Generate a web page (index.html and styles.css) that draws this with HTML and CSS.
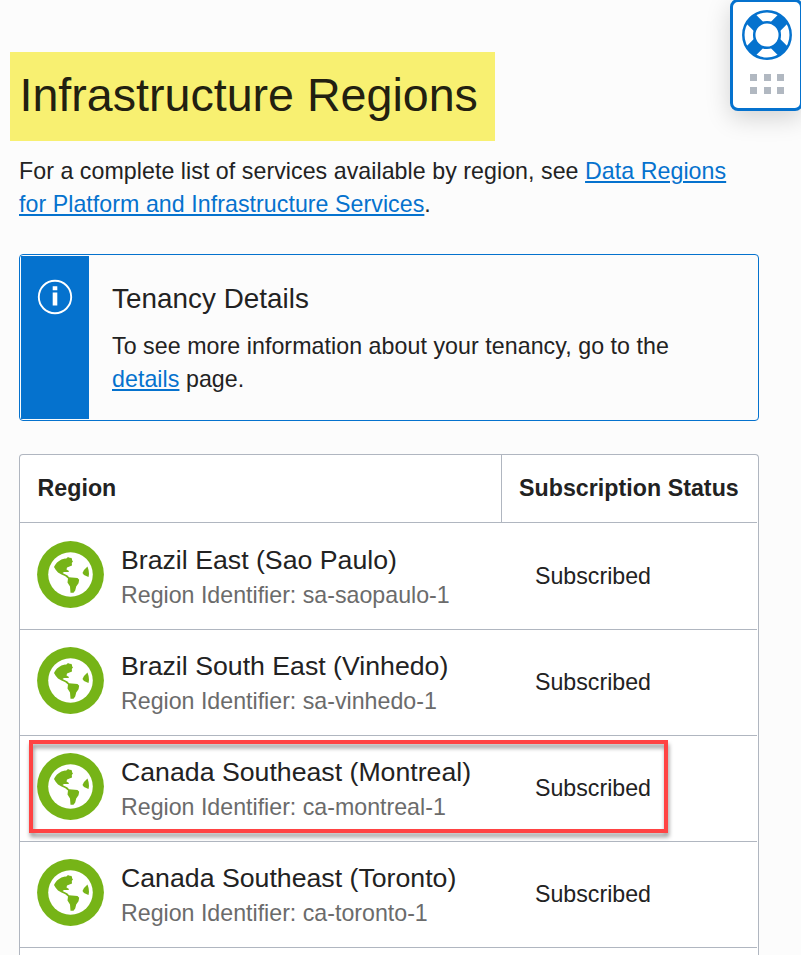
FILE: index.html
```html
<!DOCTYPE html>
<html lang="en">
<head>
<meta charset="utf-8">
<title>Infrastructure Regions</title>
<link rel="stylesheet" href="styles.css">
</head>
<body>
<svg class="defs" aria-hidden="true">
  <symbol id="globe" viewBox="0 0 67 67">
    <circle cx="33.5" cy="33.5" r="33.4" fill="#76b417"/>
    <circle cx="33.5" cy="33.5" r="22.3" fill="#fff"/>
    <path fill="#76b417" d="M17 26C19 21.5 23 18.500 28 17.500C29 17.800 29.500 17.800 30.500 16.300C31.800 16 32.500 17.300 34 16.800C35 17.300 35.200 18 35 19.200L36 20.200L34.800 22L35 24.500L32.500 25.500L30 26.500L29.500 28.500L32 30L31.500 31L27 31L25.500 32L30.500 34.500L32 36.200L40.500 37L42.200 38.700L41.500 42.200L39.200 45.500L38.200 49.500L36.500 51.700H33.500L33 45.500L30.500 41.500L31 37.500L28 35L24.500 33.500L21 31.500L18.500 28.500Z"/>
    <path fill="#76b417" d="M50.500 25.500L47 29L45.500 32L47 34L51.500 36L52 33Q52 29 50.500 25.500Z"/>
  </symbol>
</svg>
<main class="page">
  <h1 class="title">Infrastructure Regions</h1>
  <p class="intro">For a complete list of services available by region, see <a href="#">Data Regions</a><br><a href="#">for Platform and Infrastructure Services</a>.</p>
  <section class="notice">
    <div class="notice-bar">
      <svg width="36" height="36" viewBox="0 0 36 36"><circle cx="18" cy="18" r="16.200" fill="none" stroke="#fff" stroke-width="1.900"/><path fill="#fff" d="M15.700 7.300h4.600v4h-4.600zM15.700 13.500h4.600v13h-4.600z"/></svg>
    </div>
    <div class="notice-body">
      <h2>Tenancy Details</h2>
      <p>To see more information about your tenancy, go to the<br><a href="#">details</a> page.</p>
    </div>
  </section>
  <section class="table">
    <div class="head"><div class="head-region">Region</div><div class="head-status">Subscription Status</div></div>
    <div class="row"><svg class="globe"><use href="#globe"/></svg><div class="info"><div class="name">Brazil East (Sao Paulo)</div><div class="ident">Region Identifier: sa-saopaulo-1</div></div><div class="status">Subscribed</div></div>
    <div class="row"><svg class="globe"><use href="#globe"/></svg><div class="info"><div class="name">Brazil South East (Vinhedo)</div><div class="ident">Region Identifier: sa-vinhedo-1</div></div><div class="status">Subscribed</div></div>
    <div class="row"><svg class="globe"><use href="#globe"/></svg><div class="info"><div class="name">Canada Southeast (Montreal)</div><div class="ident">Region Identifier: ca-montreal-1</div></div><div class="status">Subscribed</div><div class="marker"></div></div>
    <div class="row"><svg class="globe"><use href="#globe"/></svg><div class="info"><div class="name">Canada Southeast (Toronto)</div><div class="ident">Region Identifier: ca-toronto-1</div></div><div class="status">Subscribed</div></div>
  </section>
</main>
<aside class="help">
  <svg width="52" height="52" viewBox="-26 -26 52 52">
    <circle r="24" fill="#fff"/>
    <path d="M-16.300-16.300L16.300 16.300M16.300-16.300L-16.300 16.300" stroke="#0572ce" stroke-width="13"/>
    <circle r="23.700" fill="none" stroke="#0572ce" stroke-width="2.500"/>
    <circle r="12.800" fill="#fff" stroke="#0572ce" stroke-width="2.500"/>
  </svg>
  <div class="dots"><i></i><i></i><i></i><i></i><i></i><i></i></div>
</aside>
</body>
</html>
```
FILE: styles.css
```css
* { box-sizing: border-box; }
body {
  margin: 0;
  height: 955px;
  overflow: hidden;
  background: #fcfcfc;
  color: #222;
  font: 23.2px/33px "Liberation Sans", Arial, sans-serif;
  white-space: nowrap;
}
h1, h2, p { margin: 0; font-weight: 400; }
a { color: #0572ce; text-decoration: underline; text-decoration-thickness: 2px; text-underline-offset: 2px; }
.defs { position: absolute; width: 0; height: 0; }
.page { padding: 52px 42px 0 10px; }
.title {
  width: 485px;
  height: 89px;
  padding-left: 9.5px;
  background: #f8f071;
  color: #222010;
  font-size: 46.6px;
  line-height: 87px;
}
.intro { margin: 14px 0 0 9px; letter-spacing: .05px; }
.notice {
  display: flex;
  height: 167px;
  margin: 33px 0 0 9px;
  padding: 1px;
  border: 1px solid #0572ce;
  border-radius: 4px;
}
.notice-bar { width: 68px; padding: 23px 0 0 16px; background: #0572ce; }
.notice-body { padding: 26px 0 0 23px; }
.notice-body h2 { font-size: 27.8px; line-height: 34px; letter-spacing: .05px; }
.notice-body p { margin-top: 14px; letter-spacing: .06px; }
.table {
  height: 501px;
  margin: 33px 0 0 9px;
  padding-right: 1px;
  border: 1px solid #b0b6c0;
  border-bottom: 0;
  border-radius: 4px 4px 0 0;
  background: #fff;
}
.head { display: flex; height: 68px; border-bottom: 1px solid #b0b6c0; font-weight: 700; line-height: 67px; letter-spacing: .04px; }
.head-region { width: 482px; padding-left: 17.5px; border-right: 1px solid #b0b6c0; }
.head-status { padding-left: 17px; }
.row { position: relative; display: flex; align-items: flex-start; height: 106px; padding-top: 17px; border-bottom: 1px solid #b0b6c0; }
.head + .row { height: 107px; padding-top: 18px; }
.globe { width: 67px; height: 67px; margin: 0 17px; flex: none; }
.info { width: 414px; padding-top: 2px; }
.name { font-size: 26.7px; line-height: 34px; }
.ident { color: #6b6b6b; line-height: 37px; }
.status { padding-top: 19px; }
.marker {
  position: absolute;
  left: 9px;
  top: 4px;
  width: 639px;
  height: 93px;
  border: 4px solid #ff4343;
  filter: drop-shadow(1px 4px 2px rgba(0,0,0,.4));
}
.help {
  position: absolute;
  left: 730px;
  top: -1px;
  width: 73px;
  height: 112px;
  padding: 7px 0 0 8px;
  border: 3px solid #0572ce;
  border-radius: 8px;
  background: #fff;
  box-shadow: 0 7px 24px rgba(0,0,0,.17);
}
.help svg { display: block; }
.dots { display: grid; grid-template-columns: repeat(3, 7px); gap: 6px 6.500px; margin: 13px 0 0 9px; }
.dots i { height: 7px; background: #b1b8c1; }
```
